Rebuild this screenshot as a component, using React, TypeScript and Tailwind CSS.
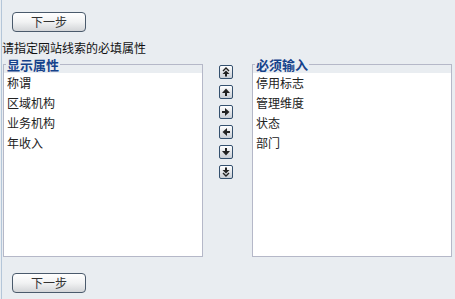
import React from "react";

const font = { fontFamily: '"Noto Sans CJK SC", "Noto Sans", sans-serif' };

function NextButton() {
  return (
    <button
      className="ml-[10px] w-[74px] h-[20px] rounded-[4px] border border-[#4a5a6c] bg-gradient-to-b from-[#ffffff] via-[#f1f2f3] to-[#d3d5d8] text-[12px] leading-[18px] text-[#333] flex items-center justify-center"
      style={font}
    >
      下一步
    </button>
  );
}

function ArrowBtn({ children }: { children: React.ReactNode }) {
  return (
    <div className="w-[14px] h-[14px] rounded-[2px] border border-[#34506e] bg-gradient-to-b from-[#ffffff] to-[#c9ced5] flex items-center justify-center">
      <svg width="12" height="12" viewBox="0 0 12 12">
        {children}
      </svg>
    </div>
  );
}

function Field({ title, items }: { title: string; items: string[] }) {
  return (
    <fieldset className="w-[200px] h-[201px] border border-[#b5b8c8] flex flex-col">
      <legend
        className="ml-[2px] px-[1px] text-[13px] leading-[17px] font-bold text-[#15428b]"
        style={font}
      >
        {title}
      </legend>
      <div className="flex-1 bg-white pl-[3px]">
        {items.map((it) => (
          <div key={it} className="h-[20px] leading-[20px] text-[12px] text-[#222]" style={font}>
            {it}
          </div>
        ))}
      </div>
    </fieldset>
  );
}

export default function App() {
  return (
    <div className="w-[455px] h-[299px] bg-[#e9edf1] pl-[1px]">
      <div className="h-full border-l border-[#b4c6d9] pt-[12px] flex flex-col">
        <NextButton />
        <div className="mt-[9px] text-[12px] leading-[14px] text-[#111]" style={font}>
          请指定网站线索的必填属性
        </div>
        <div className="mt-[1px] ml-[1px] flex items-start">
          <Field title="显示属性" items={["称谓", "区域机构", "业务机构", "年收入"]} />
          <div className="ml-[16px] mt-[9px] w-[14px] flex flex-col gap-[6px]">
            <ArrowBtn>
              <polyline points="3,5 6,2 9,5" fill="none" stroke="#222" strokeWidth="1.4" />
              <polygon points="6,4.5 2.5,8 9.5,8" fill="#222" />
              <rect x="5" y="8" width="2" height="2.5" fill="#222" />
            </ArrowBtn>
            <ArrowBtn>
              <polygon points="6,2.5 2,7 10,7" fill="#222" />
              <rect x="5" y="7" width="2" height="3" fill="#222" />
            </ArrowBtn>
            <ArrowBtn>
              <polygon points="9.5,6 5,2 5,10" fill="#222" />
              <rect x="2" y="5" width="3" height="2" fill="#222" />
            </ArrowBtn>
            <ArrowBtn>
              <polygon points="2.5,6 7,2 7,10" fill="#222" />
              <rect x="7" y="5" width="3" height="2" fill="#222" />
            </ArrowBtn>
            <ArrowBtn>
              <polygon points="6,9.5 2,5 10,5" fill="#222" />
              <rect x="5" y="2" width="2" height="3" fill="#222" />
            </ArrowBtn>
            <ArrowBtn>
              <polyline points="3,7 6,10 9,7" fill="none" stroke="#222" strokeWidth="1.4" />
              <polygon points="6,7.5 2.5,4 9.5,4" fill="#222" />
              <rect x="5" y="1.5" width="2" height="2.5" fill="#222" />
            </ArrowBtn>
          </div>
          <div className="ml-[19px]">
            <Field title="必须输入" items={["停用标志", "管理维度", "状态", "部门"]} />
          </div>
        </div>
        <div className="mt-[16px]">
          <NextButton />
        </div>
      </div>
    </div>
  );
}
